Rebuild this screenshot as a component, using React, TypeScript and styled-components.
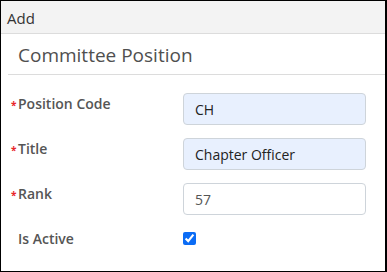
import React, { useState } from 'react';
import styled, { createGlobalStyle } from 'styled-components';

const GlobalStyle = createGlobalStyle`
  html, body {
    margin: 0;
    padding: 0;
    background: #fff;
  }
  * { box-sizing: border-box; }
`;

const Frame = styled.div`
  width: 387px;
  height: 272px;
  border: 1px solid #000;
  border-right-width: 2px;
  background: #fff;
  font-family: 'Open Sans', 'Liberation Sans', sans-serif;
  overflow: hidden;
`;

const TopBar = styled.div`
  height: 33px;
  background: #f3f3f3;
  border-bottom: 1px solid #dcdcdc;
  padding: 1px 6px 0;
  font-size: 15px;
  color: #333;
  display: flex;
  align-items: center;
`;

const Section = styled.div`
  padding: 0 0 0 7px;
`;

const SectionTitle = styled.h2`
  margin: 0;
  height: 41px;
  border-bottom: 1px solid #dcdcdc;
  padding: 1px 0 0 10px;
  display: flex;
  align-items: center;
  font-size: 19px;
  font-weight: 400;
  color: #4f4f4f;
`;

const Form = styled.div`
  display: grid;
  grid-template-columns: 172px 183px;
  grid-auto-rows: 45px;
  padding: 18px 0 0 3px;
`;

const Label = styled.label<{ $required?: boolean }>`
  display: flex;
  align-items: flex-start;
  padding-top: 1px;
  font-size: 14px;
  font-weight: 600;
  color: #555;
  &::before {
    content: '*';
    color: ${p => (p.$required ? '#e8262a' : 'transparent')};
    font-size: 10px;
    font-weight: 700;
    width: 7px;
    margin-top: 4px;
  }
`;

const Input = styled.input<{ $filled?: boolean }>`
  width: 183px;
  height: 32px;
  border: 1px solid #ced4da;
  border-radius: 4px;
  background: ${p => (p.$filled ? '#e8f0fe' : '#fff')};
  padding: 0 11px;
  font-family: 'Open Sans', 'Liberation Sans', sans-serif;
  font-size: 14px;
  color: ${p => (p.$filled ? '#222' : '#555')};
  outline: none;
`;

const Check = styled.input`
  width: 13px;
  height: 13px;
  margin: 4px 0 0 0;
  accent-color: #0b6cf5;
`;

export default function App() {
  const [active, setActive] = useState(true);
  return (
    <>
      <GlobalStyle />
      <Frame>
        <TopBar>Add</TopBar>
        <Section>
          <SectionTitle>Committee Position</SectionTitle>
          <Form>
            <Label $required>Position Code</Label>
            <Input $filled defaultValue="CH" />
            <Label $required>Title</Label>
            <Input $filled defaultValue="Chapter Officer" />
            <Label $required>Rank</Label>
            <Input defaultValue="57" />
            <Label>Is Active</Label>
            <div>
              <Check type="checkbox" checked={active} onChange={e => setActive(e.target.checked)} />
            </div>
          </Form>
        </Section>
      </Frame>
    </>
  );
}
